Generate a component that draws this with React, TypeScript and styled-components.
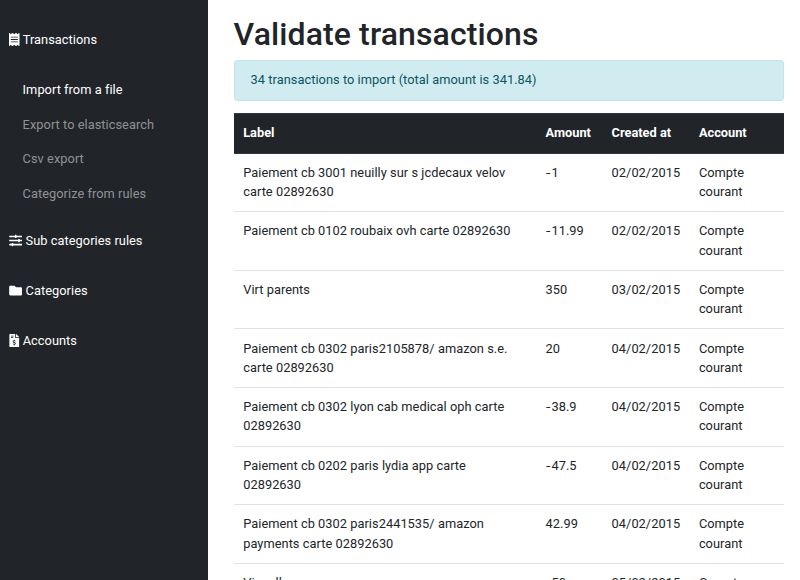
import React from "react";
import styled, { createGlobalStyle } from "styled-components";
import { FaReceipt, FaSlidersH, FaFolder, FaFileInvoiceDollar } from "react-icons/fa";

const GlobalStyle = createGlobalStyle`
  *, *::before, *::after { box-sizing: border-box; }
  body {
    margin: 0;
    overflow: hidden;
    background: #fff;
    color: #212529;
    font: 400 12.8px/19.2px Roboto, sans-serif;
    letter-spacing: 0.045px;
  }
`;

const Layout = styled.div`
  display: flex;
  height: 580px;
  overflow: hidden;
`;

const Sidebar = styled.nav`
  width: 208px;
  flex: none;
  padding-top: 15px;
  background: #212529;
  color: #fff;
`;

const SectionTitle = styled.div<{ $narrow?: boolean; $lift?: boolean }>`
  display: flex;
  align-items: center;
  height: 50px;
  padding-left: 9px;
  gap: 3.2px;

  svg {
    width: ${(p) => (p.$narrow ? 10.5 : 13.4)}px;
    height: 13px;
    margin-bottom: ${(p) => (p.$lift ? 1 : 0)}px;
    flex: none;
  }
`;

const SubMenu = styled.ul`
  list-style: none;
  margin: 0;
  padding: 8.1px 0 3.9px 22.6px;
`;

const SubItem = styled.li<{ $active?: boolean }>`
  height: 34.6px;
  line-height: 34.6px;
  color: ${(p) => (p.$active ? "#fff" : "#909294")};
`;

const Main = styled.main`
  width: 550.4px;
  margin-left: 25.6px;
  padding-top: 15.4px;
`;

const Title = styled.h1`
  margin: 0 0 6.4px;
  font-size: 32px;
  line-height: 38.4px;
  font-weight: 500;
  letter-spacing: 0.11px;
`;

const Alert = styled.div`
  margin-bottom: 12.6px;
  padding: 8.9px 16px 10.3px;
  border: 1px solid #bee5eb;
  border-radius: 3.2px;
  background: #d1ecf1;
  color: #0c5460;
`;

const Table = styled.table`
  width: 550.4px;
  table-layout: fixed;
  border-collapse: separate;
  border-spacing: 0;
`;

const Col = styled.col<{ $width: number }>`
  width: ${(p) => p.$width}px;
`;

const HeadCell = styled.th`
  padding: 9px 9.6px 10.2px;
  background: #212529;
  border: solid #32383e;
  border-width: 1px 0;
  color: #fff;
  text-align: left;
  font-weight: 700;
  letter-spacing: 0;
`;

const Cell = styled.td`
  padding: 9.2px 9.6px 10px;
  vertical-align: top;
  border-bottom: 1px solid #dee2e6;
`;

const Minus = styled.span`
  display: inline-block;
  width: 5.9px;
  transform: scaleX(1.25);
  transform-origin: left;
`;

function Amount({ value }: { value: string }) {
  return value.startsWith("-") ? <><Minus>-</Minus>{value.slice(1)}</> : <>{value}</>;
}

const rows = [
  ["Paiement cb 3001 neuilly sur s jcdecaux velov carte 02892630", "-1", "02/02/2015"],
  ["Paiement cb 0102 roubaix ovh carte 02892630", "-11.99", "02/02/2015"],
  ["Virt parents", "350", "03/02/2015"],
  ["Paiement cb 0302 paris2105878/ amazon s.e. carte 02892630", "20", "04/02/2015"],
  ["Paiement cb 0302 lyon cab medical oph carte 02892630", "-38.9", "04/02/2015"],
  ["Paiement cb 0202 paris lydia app carte 02892630", "-47.5", "04/02/2015"],
  ["Paiement cb 0302 paris2441535/ amazon payments carte 02892630", "42.99", "04/02/2015"],
  ["Vir sell", "-50", "05/02/2015"],
];

export default function App() {
  return (
    <Layout>
      <GlobalStyle />
      <Sidebar>
        <SectionTitle $narrow $lift><FaReceipt preserveAspectRatio="none" />Transactions</SectionTitle>
        <SubMenu>
          <SubItem $active>Import from a file</SubItem>
          <SubItem>Export to elasticsearch</SubItem>
          <SubItem>Csv export</SubItem>
          <SubItem>Categorize from rules</SubItem>
        </SubMenu>
        <SectionTitle><FaSlidersH />Sub categories rules</SectionTitle>
        <SectionTitle><FaFolder />Categories</SectionTitle>
        <SectionTitle $narrow><FaFileInvoiceDollar />Accounts</SectionTitle>
      </Sidebar>
      <Main>
        <Title>Validate transactions</Title>
        <Alert>34 transactions to import (total amount is 341.84)</Alert>
        <Table>
          <colgroup>
            <Col $width={302.4} /><Col $width={66} /><Col $width={87.3} /><Col $width={94.7} />
          </colgroup>
          <thead>
            <tr>
              <HeadCell>Label</HeadCell><HeadCell>Amount</HeadCell>
              <HeadCell>Created at</HeadCell><HeadCell>Account</HeadCell>
            </tr>
          </thead>
          <tbody>
            {rows.map(([label, amount, date]) => (
              <tr key={label}>
                <Cell>{label}</Cell>
                <Cell><Amount value={amount} /></Cell>
                <Cell>{date}</Cell>
                <Cell>Compte courant</Cell>
              </tr>
            ))}
          </tbody>
        </Table>
      </Main>
    </Layout>
  );
}
